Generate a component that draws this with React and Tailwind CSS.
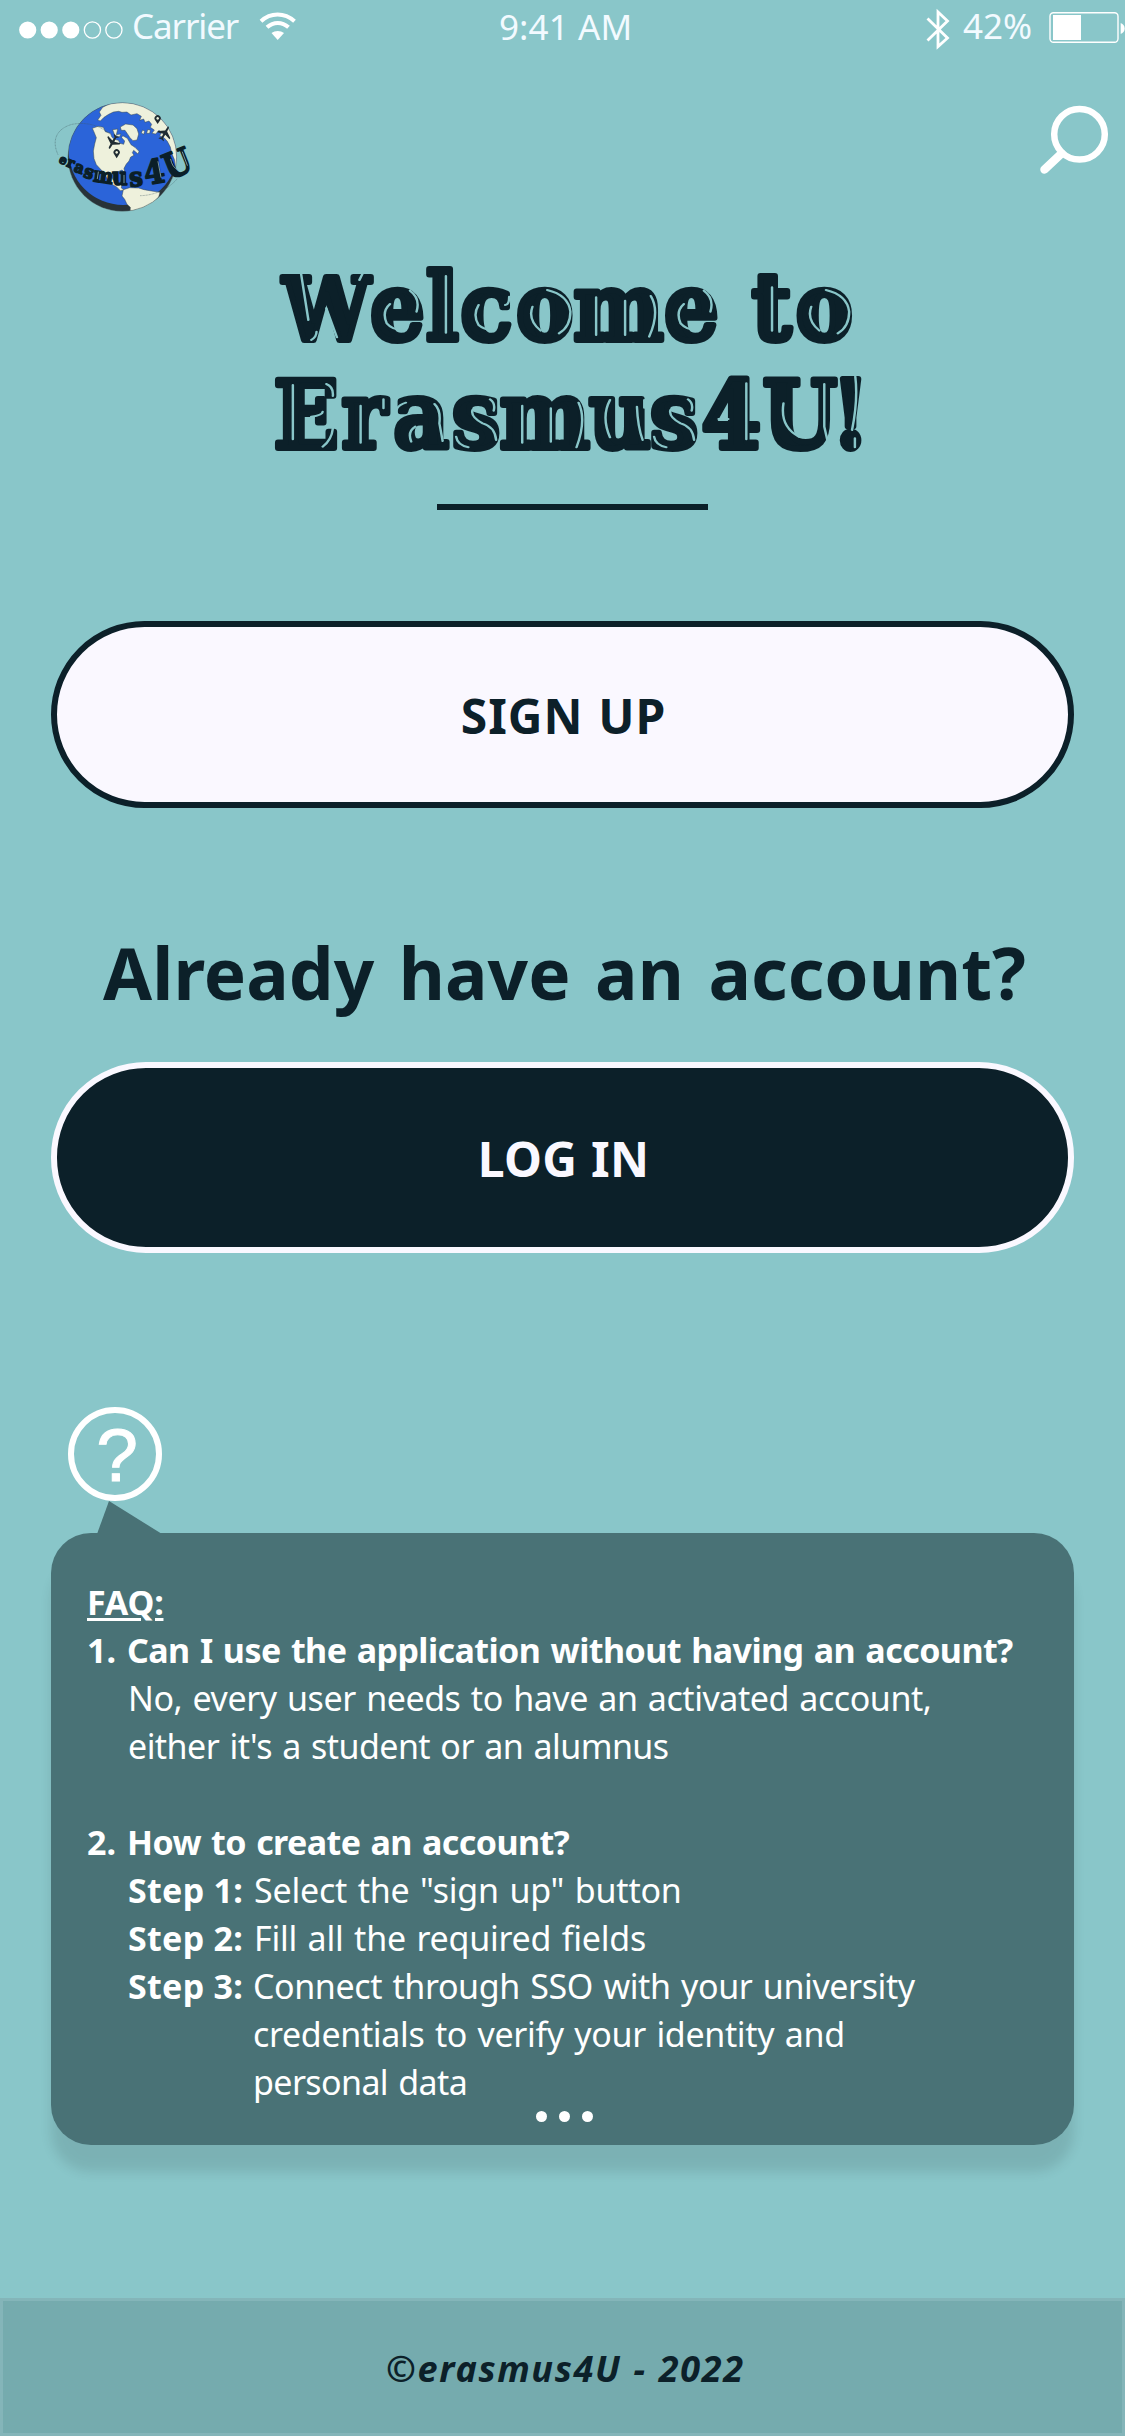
import React from 'react';

function StatusBar() {
  return (
    <div className="flex h-[50px] w-full text-[35px] leading-[50px] whitespace-nowrap text-[#f2faff]">
      <svg className="mt-[20px] ml-[18px] h-5 w-[106px] shrink-0" viewBox="0 0 106 20">
        <g fill="#fff">
          <circle cx="9.7" cy="10" r="8.6" />
          <circle cx="31.2" cy="10" r="8.6" />
          <circle cx="52.8" cy="10" r="8.6" />
        </g>
        <g fill="none" stroke="#fff" strokeWidth="1.3">
          <circle cx="74.4" cy="10" r="8.1" />
          <circle cx="95.9" cy="10" r="8.1" />
        </g>
      </svg>
      <span className="mt-[1px] ml-[8px] w-[125px] tracking-[-1.1px]">Carrier</span>
      <svg className="mt-[11px] ml-[2px] h-[30px] w-[38px] shrink-0" viewBox="0 0 38 30">
        <g fill="none" stroke="#fff" strokeWidth="4">
          <path d="M2 10.2 C11.5 1.2 25.5 1.2 35.500 10.200" />
          <path d="M8 16.300 C14.500 10.400 23 10.400 29.500 16.300" />
        </g>
        <path d="M12.500 22 C16 19.200 21.500 19.200 25 22 L18.700 29 Z" fill="#fff" />
      </svg>
      <span className="mt-[2px] ml-[202px] w-[160px] tracking-[0.1px]">9:41 AM</span>
      <svg className="mt-[8px] ml-[266px] h-[42px] w-[26px] shrink-0" viewBox="0 0 26 42">
        <path d="M2.500 10.500 L22.500 30 L13 38.500 V4 L22.500 13 L2.500 32.500" fill="none" stroke="#fff" strokeWidth="2.800" />
      </svg>
      <span className="mt-[1px] ml-[12px] w-[80px]">42%</span>
      <svg className="mt-[11px] ml-[5px] h-[34px] w-[77px] shrink-0" viewBox="0 0 77 34">
        <rect x="2" y="1.800" width="68" height="29.500" rx="3.500" fill="none" stroke="#fff" strokeWidth="1.400" />
        <rect x="5" y="4" width="28" height="25" fill="#fff" />
        <path d="M72.700 12 C78 14 78 21 72.700 23 Z" fill="#fff" />
      </svg>
    </div>
  );
}

const LAND = '#eef1dc';

function Logo() {
  return (
    <svg className="h-[130px] w-[150px]" viewBox="0 0 450 390">
      <defs>
        <clipPath id="globe">
          <circle cx="217" cy="201" r="163" />
        </clipPath>
      </defs>
      <g clipPath="url(#globe)">
        <circle cx="217" cy="201" r="163" fill="#283238" />
        <circle cx="219" cy="182" r="163" fill="#2b64d9" />
        <g fill={LAND} stroke="#3b4a4c" strokeWidth="1.500">
          <path d="M158 52 L148 66 L153 76 L143 90 L151 93 L162 82 L176 73 L190 66 L206 64 L216 67 L231 66 L243 75 L261 71 L274 79 L269 91 L281 87 L285 97 L297 93 L305 103 L301 112 L313 120 L306 130 L317 132 L327 121 L334 128 L329 137 L342 143 L352 154 L361 171 L365 190 L373 208 L377 236 L400 180 L340 60 L217 20 Z" />
          <path d="M127 115 L144 109 L160 112 L166 125 L181 130 L186 142 L194 148 L205 151 L210 160 L221 163 L224 153 L215 143 L218 137 L232 145 L243 164 L255 172 L267 184 L264 192 L251 181 L247 188 L252 196 L242 201 L237 213 L229 222 L222 235 L224 247 L216 240 L204 245 L191 246 L184 259 L190 271 L203 270 L207 279 L216 281 L214 294 L223 300 L211 302 L199 290 L184 282 L174 271 L163 250 L151 237 L139 224 L132 206 L130 183 L134 162 L139 143 L132 126 Z" />
          <path d="M188 119 L203 117 L199 134 L213 132 L208 141 L194 135 Z" />
          <path d="M211 111 L227 102 L249 105 L261 116 L266 132 L261 150 L249 152 L240 143 L232 131 L225 121 L214 121 Z" />
          <path d="M278 120 L284 124 L281 133 L274 129 Z" />
          <path d="M293 119 L301 120 L299 130 L290 130 Z" />
          <path d="M220 299 L239 293 L266 294 L282 299 L299 302 L330 307 L326 321 L318 330 L308 348 L240 370 L241 352 L231 343 L224 328 L216 318 Z" />
        </g>
      </g>
      <circle cx="217" cy="201" r="163" fill="none" stroke="#4a5e60" strokeWidth="1.500" />
      <g fill="none" stroke="#3f5a60" strokeWidth="1.300" strokeDasharray="3 1.500">
        <path d="M24 194 C4 150 20 116 66 103 C110 95 148 106 180 132" />
        <path d="M270 317 C302 317 350 304 382 266" />
      </g>
      <g fill="#202c32">
        <g transform="translate(188 157) rotate(210) scale(0.85)">
          <path d="M-3 -22 Q0 -30 3 -22 L4 -8 L25 6 L25 11 L4 5 L3 19 L10 25 L10 28 L0 25 L-10 28 L-10 25 L-3 19 L-4 5 L-25 11 L-25 6 L-4 -8 Z" />
        </g>
        <g transform="translate(345 129) rotate(30) scale(0.85)">
          <path d="M-3 -22 Q0 -30 3 -22 L4 -8 L25 6 L25 11 L4 5 L3 19 L10 25 L10 28 L0 25 L-10 28 L-10 25 L-3 19 L-4 5 L-25 11 L-25 6 L-4 -8 Z" />
        </g>
        <path fillRule="evenodd" d="M200 205 L192 192 A9.500 9.500 0 1 1 208 192 Z M200 183 a4 4 0 1 0 0.100 0 Z" />
        <path fillRule="evenodd" d="M323 102 L315 90 A9.500 9.500 0 1 1 331 90 Z M323 81 a4 4 0 1 0 0.100 0 Z" />
      </g>
      <text
        className="font-['DejaVu_Serif_Condensed','DejaVu_Serif',serif] font-bold"
        x="25 47 70 98 128 186 240 287 357"
        y="217 228 243 260 274 286 290 285 271"
        rotate="25 22 20 17 8 0 -5 -9 -22"
        fill="#0b1f28"
        stroke="#0b1f28"
        strokeWidth="4.500"
        strokeLinejoin="round"
      >
        <tspan fontSize="38">e</tspan>
        <tspan fontSize="44">r</tspan>
        <tspan fontSize="48">a</tspan>
        <tspan fontSize="56">s</tspan>
        <tspan fontSize="62">m</tspan>
        <tspan fontSize="72">u</tspan>
        <tspan fontSize="80">s</tspan>
        <tspan fontSize="100">4</tspan>
        <tspan fontSize="106">U</tspan>
      </text>
      <g fill="none" stroke="#8fb0b4" strokeWidth="2.500" strokeLinecap="round">
        <path d="M324 215 L333 262" />
        <path d="M362 208 Q366 232 384 240" />
        <path d="M397 186 L412 226" />
        <path d="M145 246 L142 266" />
        <path d="M222 256 L222 278" />
      </g>
    </svg>
  );
}

/* Glossy cut lines that run inside the heading's letters. */
const SHINE_TOP =
  'M125 100 L143 240 M187 205 L213 292 M150 300 Q163 290 163 275 M268 120 L277 98 M343 192 Q322 215 335 250 Q348 268 372 270 M392 152 Q418 175 408 215 M480 108 V278 M560 195 Q545 225 560 255 Q580 275 600 265 M625 195 Q635 195 635 170 M692 200 Q680 240 712 272 M728 150 Q780 165 785 215 Q785 260 757 280 M848 172 V285 M919 182 V285 M982 168 Q1005 215 978 290 M1063 192 Q1042 215 1055 250 Q1068 268 1092 270 M1112 152 Q1138 175 1128 215 M1279 142 V272 M1375 200 Q1363 240 1395 272 M1411 150 Q1463 165 1468 215 Q1468 260 1440 280';
const SHINE_BOTTOM =
  'M105 435 V598 M187 432 Q205 440 203 468 M150 530 Q178 525 178 515 M203 565 Q200 600 178 620 M271 497 V608 M327 478 V505 M362 530 Q350 500 382 488 M452 492 Q468 510 464 550 L472 603 M405 560 Q385 575 395 605 M588 478 Q602 490 597 512 M545 510 Q540 530 570 550 Q600 560 603 600 M505 590 Q508 615 535 622 M667 497 V608 M737 505 V605 M805 488 Q825 540 800 622 M882 480 Q860 530 882 592 M948 500 Q950 560 962 600 M966 480 V503 M1073 478 Q1087 490 1082 512 M1030 510 Q1025 530 1055 550 Q1085 560 1088 600 M990 590 Q993 615 1020 622 M1216 430 V598 M1148 537 H1172 M1307 490 Q1298 560 1345 590 M1407 432 V560 L1415 603 M1483 410 Q1490 480 1475 570 M1482 595 V622';

function Title() {
  return (
    <h1 className="mt-[20px] ml-[250px] h-[240px] shrink-0">
      <svg className="h-[240px] w-[640px]" viewBox="250 240 640 240">
        <g
          className="font-['DejaVu_Serif_Condensed','DejaVu_Serif',serif] text-[94px] font-bold"
          fill="#0c2029"
          stroke="#0c2029"
          strokeWidth="6"
          strokeLinejoin="round"
        >
          <text x="283 370.500 426.300 460.800 516.500 573.800 664.500 720 752 796" y="339.500">
            <tspan fontSize="86">W</tspan>elcome to
          </text>
          <text x="274 342 393.700 452.300 500 589.200 650.300 701.800 763 832" y="447.800">Erasmus4U!</text>
        </g>
        <g transform="translate(250 240) scale(0.40816 0.33333)" fill="none" stroke="#89c6c9" strokeWidth="6" strokeLinecap="round">
          <path d={SHINE_TOP} />
          <path d={SHINE_BOTTOM} />
        </g>
      </svg>
    </h1>
  );
}

function Step({ label, children }) {
  return (
    <div className="flex">
      <b className="w-[126px] shrink-0 tracking-[0.3px]">{label}</b>
      <div>{children}</div>
    </div>
  );
}

function Faq() {
  return (
    <section className="relative ml-[51px] h-[612px] w-[1023px] rounded-[40px] bg-[#497276] text-[34px] leading-[48px] whitespace-nowrap text-white shadow-[0_27px_12px_rgba(0,0,0,0.1)]">
      <svg className="absolute -top-[32px] left-[46px] h-[33px] w-[65px]" viewBox="0 0 65 33">
        <path d="M12 0 L65 33 H0 Z" fill="#497276" />
      </svg>
      <div className="pt-[45px] pl-[36px]">
        <h2 className="font-bold tracking-[-0.2px] underline decoration-[3px] underline-offset-[3px]">FAQ:</h2>
        <div className="flex font-bold">
          <span className="w-[40px]">1.</span>
          <span className="tracking-[-0.56px] [word-spacing:2px]">Can I use the application without having an account?</span>
        </div>
        <p className="pl-[41px] tracking-[-0.45px] [word-spacing:2px]">No, every user needs to have an activated account,</p>
        <p className="pl-[41px] tracking-[-0.55px] [word-spacing:2px]">either it's a student or an alumnus</p>
        <div className="mt-[48px] flex font-bold">
          <span className="w-[40px]">2.</span>
          <span className="tracking-[-0.6px] [word-spacing:2px]">How to create an account?</span>
        </div>
        <div className="pl-[41px]">
          <Step label="Step 1:">
            <p className="tracking-[-0.22px] [word-spacing:2px]">Select the "sign up" button</p>
          </Step>
          <Step label="Step 2:">
            <p className="tracking-[-0.24px] [word-spacing:2px]">Fill all the required fields</p>
          </Step>
          <Step label="Step 3:">
            <p className="-ml-[1px] tracking-[-0.4px] [word-spacing:2px]">Connect through SSO with your university</p>
            <p className="-ml-[1px] tracking-[-0.34px] [word-spacing:2px]">credentials to verify your identity and</p>
            <p className="-ml-[1px] tracking-[-0.6px] [word-spacing:2px]">personal data</p>
          </Step>
        </div>
      </div>
      <div className="mt-[5px] ml-[485px] flex gap-[12px]">
        <i className="size-[11px] rounded-full bg-white" />
        <i className="size-[11px] rounded-full bg-white" />
        <i className="size-[11px] rounded-full bg-white" />
      </div>
    </section>
  );
}

export default function App() {
  return (
    <div className="flex h-[2436px] w-[1125px] flex-col overflow-hidden bg-[#89c6c9] font-['Noto_Sans','Open_Sans',sans-serif] text-[#0c2029]">
      <StatusBar />
      <header className="mt-[40px] flex justify-between pr-[15px] pl-[50px]">
        <Logo />
        <svg className="mt-[14px] h-[72px] w-[72px]" viewBox="0 0 72 72" fill="none" stroke="#fff">
          <circle cx="41.500" cy="30.300" r="25.300" strokeWidth="6.500" />
          <path d="M23.500 49.500 L6.500 65.500" strokeWidth="8.500" strokeLinecap="round" />
        </svg>
      </header>
      <Title />
      <div className="mt-[24px] ml-[437px] h-[6px] w-[271px] shrink-0 bg-[#0c2029]" />
      <button className="mt-[111px] ml-[51px] h-[187px] w-[1023px] shrink-0 rounded-[94px] border-[6px] border-[#0c2029] bg-[#faf8ff] pt-[2px] pl-[2px] text-[48px] leading-[48px] font-bold tracking-[1px] [word-spacing:1px]">
        SIGN UP
      </button>
      <h2 className="mt-[117px] ml-[103px] text-[71px] leading-[96px] font-bold tracking-[0.05px] [word-spacing:6px] whitespace-nowrap">
        Already have an account?
      </h2>
      <button className="mt-[41px] ml-[51px] h-[191px] w-[1023px] shrink-0 rounded-[95px] border-[6px] border-[#faf8ff] bg-[#0c2029] pt-[3px] pl-[2px] text-[48px] leading-[48px] font-bold tracking-[0.3px] text-[#faf8ff] [word-spacing:1px]">
        LOG IN
      </button>
      <div className="mt-[154px] ml-[68px] flex h-[94px] w-[94px] shrink-0 items-center justify-center rounded-full border-[6px] border-white font-['Liberation_Sans',Arial,sans-serif] text-[75px] leading-[82px] text-white [-webkit-text-stroke:1px_white]">
        <span className="mt-[1px] ml-[4px]">?</span>
      </div>
      <div className="mt-[32px]">
        <Faq />
      </div>
      <footer className="mt-auto h-[138px] border-[3px] border-[#84b5b9] bg-[#75abae] pt-[44px] pl-[383px] text-[36px] leading-[48px] font-bold tracking-[1.65px] italic [word-spacing:1px]">
        ©erasmus4U - 2022
      </footer>
    </div>
  );
}
